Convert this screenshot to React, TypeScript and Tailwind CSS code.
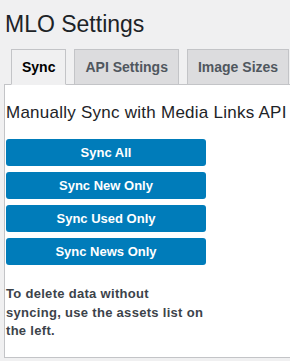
import React from "react";

const tabs = ["Sync", "API Settings", "Image Sizes"];
const actions = ["Sync All", "Sync New Only", "Sync Used Only", "Sync News Only"];

export default function App() {
  return (
    <div className="min-h-screen w-full overflow-hidden bg-[#f0f0f1] text-[#1d2327] [font-family:'Liberation_Sans',Arial,sans-serif]">
      <h1 className="pl-[5px] pt-[10px] text-[23px] leading-[29px] font-normal">MLO Settings</h1>
      {/* tabs */}
      <div className="mt-[10px] flex gap-2 pl-[11px] whitespace-nowrap">
        {tabs.map((t, i) => (
          <div
            key={t}
            className={`h-[36px] shrink-0 border border-[#c3c4c7] px-[10px] text-[14px] font-bold leading-[34px] ${
              i === 0 ? "relative z-10 border-b-[#f0f0f1] bg-[#f0f0f1] text-[#000]" : "bg-[#dcdcde] text-[#50575e]"
            }`}
          >
            {t}
          </div>
        ))}
      </div>
      {/* panel */}
      <div className="-mt-px ml-[4px] w-[300px] border border-[#c3c4c7] bg-white pt-[17px] pb-[16px] pl-px">
        <h2 className="text-[17px] leading-[22px] font-normal tracking-[0.25px] text-[#1d2327] whitespace-nowrap">
          Manually Sync with Media Links API
        </h2>
        <div className="mt-[15px] flex w-[200px] flex-col gap-[6px]">
          {actions.map((a) => (
            <button
              key={a}
              className="h-[27px] rounded-[3px] bg-[#007cba] text-[13px] font-bold text-white"
            >
              {a}
            </button>
          ))}
        </div>
        <p className="mt-[20px] w-[200px] text-[13px] leading-[18.5px] font-bold tracking-[0.3px] text-[#3c434a]">
          To delete data without syncing, use the assets list on the left.
        </p>
      </div>
    </div>
  );
}
